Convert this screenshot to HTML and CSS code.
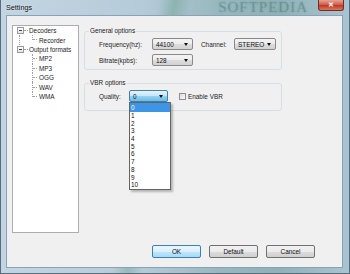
FILE: index.html
```html
<!DOCTYPE html>
<html lang="en">
<head>
  <meta charset="UTF-8">
  <title>Settings</title>
  <link rel="stylesheet" href="styles.css">
</head>
<body>
  <div class="window">
    <div class="titlebar">
      <span class="title">Settings</span>
      <span class="mark">SOFTPEDIA</span>
      <span class="close">&#x2715;</span>
    </div>

    <div class="client">
      <div class="main">
        <div class="tree">
          <div class="node">
            <span class="exp"></span><span class="stub"></span><span>Decoders</span>
          </div>
          <div class="kids kids-line">
            <div class="node"><span class="branch last"></span><span>Recorder</span></div>
          </div>
          <div class="node">
            <span class="exp"></span><span class="stub"></span><span>Output formats</span>
          </div>
          <div class="kids">
            <div class="node"><span class="branch"></span><span>MP2</span></div>
            <div class="node"><span class="branch"></span><span>MP3</span></div>
            <div class="node"><span class="branch"></span><span>OGG</span></div>
            <div class="node"><span class="branch"></span><span>WAV</span></div>
            <div class="node"><span class="branch last"></span><span>WMA</span></div>
          </div>
        </div>

        <div class="panel">
          <fieldset class="group general">
            <legend>General options</legend>
            <div class="opts">
              <span>Frequency(hz):</span>
              <div class="combo"><span>44100</span><i class="arrow"></i></div>
              <span class="channel">Channel:</span>
              <div class="combo"><span>STEREO</span><i class="arrow"></i></div>
              <span>Bitrate(kpbs):</span>
              <div class="combo"><span>128</span><i class="arrow"></i></div>
            </div>
          </fieldset>

          <fieldset class="group vbr">
            <legend>VBR options</legend>
            <div class="vbr-row">
              <span class="quality">Quality:</span>
              <div class="combo-wrap">
                <div class="combo open"><span>0</span><i class="arrow"></i></div>
                <ul class="list">
                  <li class="sel">0</li>
                  <li>1</li>
                  <li>2</li>
                  <li>3</li>
                  <li>4</li>
                  <li>5</li>
                  <li>6</li>
                  <li>7</li>
                  <li>8</li>
                  <li>9</li>
                  <li>10</li>
                </ul>
              </div>
              <span class="check"></span>
              <span>Enable VBR</span>
            </div>
          </fieldset>
        </div>
      </div>

      <div class="buttons">
        <button class="btn default-btn">OK</button>
        <button class="btn">Default</button>
        <button class="btn">Cancel</button>
      </div>
    </div>
  </div>
</body>
</html>
```

FILE: styles.css
```css
body {
  margin: 0;
  font-family: "Liberation Sans", Arial, sans-serif;
  font-size: 6.4px;
  color: #1e1e1e;
}

.window {
  width: 350px;
  height: 274px;
  box-sizing: border-box;
  border: 1px solid #5a6d7e;
  border-top: none;
  padding: 0 6px 5px 5px;
  display: flex;
  flex-direction: column;
  background:
    linear-gradient(100deg, rgba(255,255,255,0) 40%, rgba(90,150,120,0.35) 44%, rgba(255,255,255,0) 48%),
    linear-gradient(90deg, #c2d5e2 0%, #b6cbd9 40%, #98b8bf 62%, #8fb2b6 80%, #a9c4d2 100%);
}

.titlebar {
  height: 15px;
  display: flex;
  align-items: center;
}

.title {
  font-size: 7.2px;
  color: #111;
  text-shadow: 0 0 3px #e8f0f6;
}

.mark {
  margin-left: auto;
  margin-right: 10px;
  font-family: "Liberation Serif", serif;
  font-size: 15px;
  letter-spacing: 1px;
  color: rgba(40, 95, 90, 0.25);
  text-shadow: 0 0 2px rgba(40, 95, 90, 0.3);
  line-height: 15px;
}

.close {
  align-self: flex-start;
  width: 26px;
  height: 11px;
  margin-right: -1px;
  box-sizing: border-box;
  border: 1px solid #7a2a22;
  border-top: none;
  border-radius: 0 0 3px 3px;
  background: linear-gradient(#e6a394, #d0604f 45%, #c13a26 55%, #d87a5c);
  color: #fff;
  font-size: 7px;
  line-height: 10px;
  text-align: center;
  font-weight: bold;
}

.client {
  flex: 1;
  box-sizing: border-box;
  border: 1px solid #8ba1b6;
  background: #f0f0f0;
  padding: 9px 27px 9px 5px;
  display: flex;
  flex-direction: column;
}

.main {
  display: flex;
  height: 208px;
}

.tree {
  width: 67px;
  height: 208px;
  box-sizing: border-box;
  border: 1px solid #abadb3;
  background: #fff;
}

.node {
  height: 9.4px;
  display: flex;
  align-items: center;
}

.exp {
  width: 5px;
  height: 5px;
  margin-left: 4px;
  border: 1px solid #9a9a9a;
  background: linear-gradient(#fff, #e4e4e4);
  display: flex;
  align-items: center;
  justify-content: center;
}

.exp::before {
  content: "";
  width: 3px;
  height: 1px;
  background: #444;
}

.stub {
  width: 4px;
  border-top: 1px dotted #a0a0a0;
  margin-right: 1px;
}

.kids {
  padding-left: 19px;
}

.kids-line {
  margin-left: 6px;
  padding-left: 12px;
  border-left: 1px dotted #a0a0a0;
}

.branch {
  width: 5px;
  align-self: stretch;
  border-left: 1px dotted #a0a0a0;
  margin-right: 1px;
  display: flex;
  align-items: center;
}

.branch::after {
  content: "";
  width: 4px;
  border-top: 1px dotted #a0a0a0;
}

.branch.last {
  align-self: flex-start;
  height: 5px;
  align-items: flex-end;
}

.panel {
  width: 198px;
  margin-left: 5px;
}

.group {
  margin: 0;
  border: 1px solid #d5dfe5;
  border-radius: 3px;
  padding: 3px 4px 3px 14px;
}

.group legend {
  padding: 0 1px;
  margin-left: -10px;
  line-height: 8px;
  color: #222;
}

.general {
  margin-top: 2px;
}

.vbr {
  margin-top: 9px;
  padding-bottom: 8px;
}

.opts {
  display: grid;
  grid-template-columns: 53px 41px 41px 42px;
  grid-template-rows: 12px 12px;
  row-gap: 4px;
  align-items: center;
}

.channel {
  padding-left: 8px;
}

.combo {
  height: 12px;
  box-sizing: border-box;
  border: 1px solid #8a8a8a;
  border-radius: 2px;
  background: linear-gradient(#f4f4f4, #ebebeb 50%, #dddddd 51%, #d2d2d2);
  display: flex;
  align-items: center;
  justify-content: space-between;
  padding: 0 4px 0 3px;
  color: #111;
}

.combo.open {
  border-color: #3c7fb1;
  background: linear-gradient(#e5f4fc, #c4e5f6 50%, #98d1ef 51%, #6cbbe4);
}

.arrow {
  width: 0;
  height: 0;
  border-left: 2.5px solid transparent;
  border-right: 2.5px solid transparent;
  border-top: 3px solid #111;
}

.vbr-row {
  display: flex;
  align-items: center;
  height: 12px;
}

.quality {
  width: 30px;
}

.combo-wrap {
  position: relative;
  width: 39px;
}

.list {
  position: absolute;
  top: 12px;
  left: 0;
  width: 40px;
  margin: 0;
  padding: 0;
  list-style: none;
  background: #fff;
  border: 1px solid #646464;
  box-shadow: 2px 2px 2px rgba(0, 0, 0, 0.25);
  z-index: 2;
}

.list li {
  height: 7.7px;
  line-height: 7.7px;
  padding-left: 1px;
  color: #111;
}

.list li.sel {
  height: 9px;
  line-height: 9px;
  background: #3d95e6;
  color: #fff;
}

.check {
  width: 7px;
  height: 7px;
  box-sizing: border-box;
  margin-left: 11px;
  margin-right: 2px;
  border: 1px solid #8e8f8f;
  background: linear-gradient(135deg, #dcdcdc, #fbfbfb);
}

.buttons {
  margin-top: 12px;
  display: flex;
  justify-content: flex-end;
  gap: 8px;
}

.btn {
  width: 49px;
  height: 13px;
  padding: 0;
  font-family: inherit;
  font-size: 6.4px;
  color: #111;
  border: 1px solid #707070;
  border-radius: 2px;
  background: linear-gradient(#f2f2f2, #ebebeb 50%, #dddddd 51%, #cfcfcf);
}

.default-btn {
  border-color: #3c7fb1;
  background: linear-gradient(#eaf6fd, #d9f0fc 50%, #bee6fd 51%, #a7d9f5);
}
```
